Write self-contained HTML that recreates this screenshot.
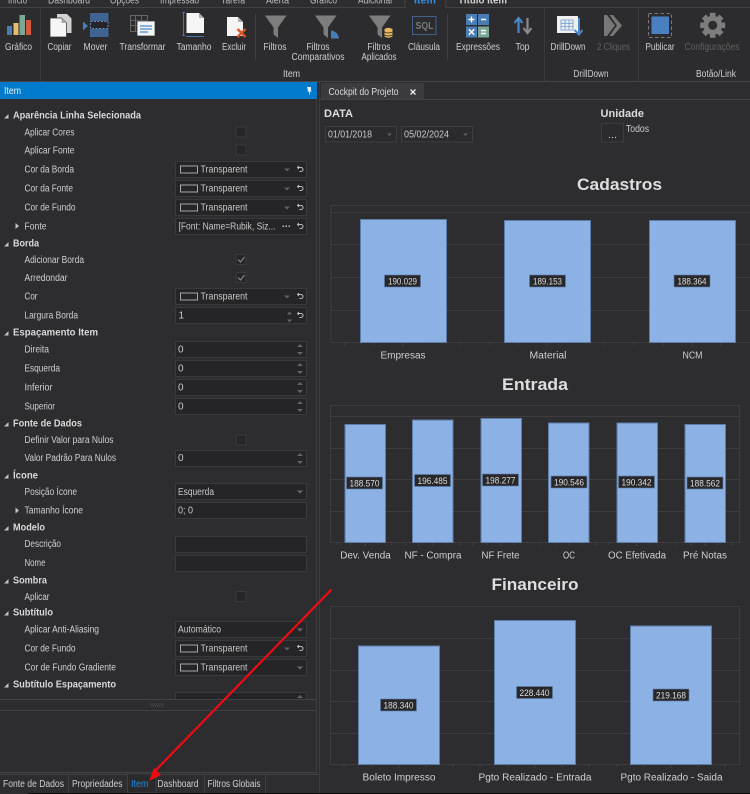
<!DOCTYPE html>
<html lang="pt"><head><meta charset="utf-8"><title>Cockpit do Projeto</title>
<style>
html,body{margin:0;padding:0;background:#2d2d30;width:750px;height:794px;overflow:hidden}
svg{display:block;filter:blur(.3px)}
text{font-family:"Liberation Sans",sans-serif;font-size:10px;fill:#cfcfcf}
.h{font-weight:bold;fill:#d8d8d8;font-size:10px}
.v{fill:#c8c8c8}
.r{text-anchor:middle;fill:#cdcdcd;font-size:10px}
.t{font-weight:bold;font-size:17px;fill:#dedede;text-anchor:middle}
.c{text-anchor:middle;font-size:10px;fill:#cfcfcf}
.l{text-anchor:middle;font-size:9.5px;fill:#dcdcdc}
</style></head><body>
<svg width="750" height="794" viewBox="0 0 750 794">
<defs>
<g id="ctl"><rect x="175.500" y=".5" width="131" height="16" fill="#252527" stroke="#3a3a3d"/></g>
<g id="sw"><rect x="180.500" y="5" width="17" height="7" fill="none" stroke="#a8a8a8"/></g>
<path id="dd" d="M284 7.500h6l-3 3z" fill="#5f5f62"/>
<path id="dd2" d="M297 7.500h6l-3 3z" fill="#6a6a6d"/>
<g id="rs"><path d="M298.500 6.500h2.500a2 2 0 0 1 0 4h-1.500" fill="none" stroke="#bdbdbd"/><path d="M299 4.500l-2.200 2 2.200 2z" fill="#bdbdbd"/></g>
<g id="sp"><path d="M297 6l3-3 3 3zM297 11h6l-3 3z" fill="#636366"/></g>
<rect id="cb" x="236" y="0" width="10" height="10" fill="#262628" stroke="#3a3a3d"/>
<path id="tri" d="M3.500 3.500h-4.500l4.500-4.500z" fill="#c0c0c0"/>
<path id="tr2" d="M0-3l3.500 3-3.500 3z" fill="#c0c0c0"/>
<path id="fun" d="M0 0h21.500L13 12v10.500L8.500 19V12z" fill="#7d7d7d"/>
</defs>

<rect width="750" height="794" fill="#2d2d30"/>
<!-- Top tabs -->
<text x="8" y="3.500" textLength="19" lengthAdjust="spacingAndGlyphs" style="fill:#bdbdbd">Início</text>
<text x="48" y="3.500" textLength="42" lengthAdjust="spacingAndGlyphs" style="fill:#bdbdbd">Dashboard</text>
<text x="110" y="3.500" textLength="29" lengthAdjust="spacingAndGlyphs" style="fill:#bdbdbd">Opções</text>
<text x="160" y="3.500" textLength="39" lengthAdjust="spacingAndGlyphs" style="fill:#bdbdbd">Impressão</text>
<text x="221" y="3.500" textLength="24" lengthAdjust="spacingAndGlyphs" style="fill:#bdbdbd">Tarefa</text>
<text x="266" y="3.500" textLength="23" lengthAdjust="spacingAndGlyphs" style="fill:#bdbdbd">Alerta</text>
<text x="310" y="3.500" textLength="27" lengthAdjust="spacingAndGlyphs" style="fill:#bdbdbd">Gráfico</text>
<text x="358" y="3.500" textLength="34" lengthAdjust="spacingAndGlyphs" style="fill:#bdbdbd">Adicional</text>
<text x="414" y="3.500" textLength="22" lengthAdjust="spacingAndGlyphs" style="fill:#2f8fe6;font-weight:bold">Item</text>
<text x="458" y="3.500" textLength="49" lengthAdjust="spacingAndGlyphs" style="font-weight:bold;fill:#d5d5d5">Título Item</text>
<path d="M0 7.500H405V0M446 0V7.500H750" fill="none" stroke="#424245"/>
<rect x="0" y="8" width="750" height="73" fill="#2c2c2f"/>
<path d="M0 81.500H750" stroke="#454548"/>
<path d="M40.500 8V81M544.500 8V81M638.500 8V81" stroke="#3a3a3d"/>
<path d="M255.500 14V60M447.500 14V60" stroke="#3f3f42"/>

<!-- Ribbon icons -->
<rect x="7" y="26" width="5" height="9" fill="#4a7db5"/>
<rect x="13.500" y="23" width="5" height="12" fill="#e3bd6a"/>
<rect x="19.500" y="15" width="5.500" height="20" fill="#7ba797"/>
<rect x="26" y="20" width="5" height="15" fill="#d6593b"/>

<path d="M57 14h10l4.500 4.500V33H57z" fill="#d2d2d2"/>
<path d="M50 18h11.500l5 5v14H50z" fill="#f6f6f6" stroke="#2c2c2f" stroke-width=".7"/>
<path d="M61.500 18v5h5z" fill="#aaa"/>

<rect x="90" y="13" width="18.500" height="8" fill="#3f6491"/>
<rect x="90" y="29" width="18.500" height="8" fill="#3f6491"/>
<rect x="90.500" y="21.500" width="17.500" height="7" fill="#24242a" stroke="#6b8fc0" stroke-dasharray="2 1.500"/>
<path d="M83 21.500v9l5-4.500z" fill="#4a7db5"/>

<path d="M130.500 15.500h17v16h-17zM130.500 20.500h17M130.500 25.500h17M135.500 15.500v16M141.500 15.500v16" stroke="#666" fill="none"/>
<rect x="137" y="21" width="18" height="15" fill="#f3f3f3" stroke="#2c2c2f" stroke-width=".7"/>
<path d="M140 26h12M140 29h12M140 32h8" stroke="#6b9bd0" stroke-width="1.500"/>

<path d="M183.500 12V36M182 12.500h3M182 35.500h3" stroke="#4a74a8"/>
<path d="M186.500 13h12.500l5 5v15H186.500z" fill="#f5f5f5"/><path d="M199 13v5h5z" fill="#b0b0b0"/>
<path d="M186 36.500h18" stroke="#4a74a8"/>

<path d="M227 17h11l5 5v14H227z" fill="#f5f5f5"/><path d="M238 17v5h5z" fill="#b0b0b0"/>
<path d="M237.500 29l8 8M245.500 29l-8 8" stroke="#d9542b" stroke-width="2.400"/>

<use href="#fun" x="265" y="15.500"/>
<use href="#fun" x="315" y="15.500"/>
<path d="M331 38.500v-8q7 1 8 8z" fill="#4a7db5"/>
<use href="#fun" x="369" y="15.500"/>
<path d="M384.500 29q4-2.500 8 0v7.500q-4 2.500-8 0z" fill="#e3b85f"/><path d="M384.500 32q4 2 8 0M384.500 35q4 2 8 0" stroke="#2c2c2f" stroke-width=".7" fill="none"/>

<rect x="412.500" y="16.500" width="23.500" height="18" fill="none" stroke="#41618c"/>
<text x="415.500" y="29" textLength="18" lengthAdjust="spacingAndGlyphs" style="font-weight:bold;font-size:10px;fill:#7a7a7a">SQL</text>

<rect x="466" y="14" width="11" height="11" fill="#4a7db5"/><rect x="478" y="14" width="11" height="11" fill="#4a7db5"/>
<rect x="466" y="26.500" width="11" height="11" fill="#4a7db5"/><rect x="478" y="26.500" width="11" height="11" fill="#7ba797"/>
<path d="M468.500 19.500h6M471.500 16.500v6M481 19.500h5M468.800 29.300l5.400 5.400M474.200 29.300l-5.400 5.400M481 30.500h5M481 33.500h5" stroke="#fff" stroke-width="1.400" fill="none"/>

<path d="M518.500 33V19M514.500 23l4-5 4 5" fill="none" stroke="#4a86c8" stroke-width="2.200"/>
<path d="M527.500 18V32M523.500 28l4 5 4-5" fill="none" stroke="#8a8a8a" stroke-width="2.200"/>

<rect x="557" y="16" width="21" height="17" fill="#efefef"/>
<path d="M561 20h12v10h-12zM561 23.300h12M561 26.600h12M565 20v10M569 20v10" fill="none" stroke="#6b9bd0" stroke-width=".8"/>
<path d="M579 18V33M574.500 30l4.500 4.500 3.500-4.500" fill="none" stroke="#4a86c8" stroke-width="2"/>

<path d="M604 15h3l8 10.500-8 10.500h-3z" fill="#777"/>
<path d="M609.500 15h3.500l9 10.500-9 10.500h-3.500l7.500-10.500z" fill="#777"/>

<rect x="648.500" y="13.500" width="23" height="24" fill="none" stroke="#777" stroke-dasharray="3.500 2.500"/>
<rect x="651.500" y="16.500" width="17.500" height="17.500" fill="#4a7fc1"/>

<g transform="translate(712.700 25.300)" fill="#7d7d7d">
<circle r="9.500"/>
<rect x="-2.800" y="-12.500" width="5.600" height="25"/><rect x="-2.800" y="-12.500" width="5.600" height="25" transform="rotate(45)"/><rect x="-2.800" y="-12.500" width="5.600" height="25" transform="rotate(90)"/><rect x="-2.800" y="-12.500" width="5.600" height="25" transform="rotate(135)"/>
<circle r="4.500" fill="#2c2c2f"/>
</g>

<!-- Ribbon labels -->
<text class="r" x="18.500" y="50" textLength="27" lengthAdjust="spacingAndGlyphs">Gráfico</text>
<text class="r" x="59.500" y="50" textLength="24" lengthAdjust="spacingAndGlyphs">Copiar</text>
<text class="r" x="95.500" y="50" textLength="24" lengthAdjust="spacingAndGlyphs">Mover</text>
<text class="r" x="142.500" y="50" textLength="46" lengthAdjust="spacingAndGlyphs">Transformar</text>
<text class="r" x="194" y="50" textLength="35" lengthAdjust="spacingAndGlyphs">Tamanho</text>
<text class="r" x="234" y="50" textLength="24" lengthAdjust="spacingAndGlyphs">Excluir</text>
<text class="r" x="275" y="50" textLength="23" lengthAdjust="spacingAndGlyphs">Filtros</text>
<text class="r" x="318" y="50" textLength="23" lengthAdjust="spacingAndGlyphs">Filtros</text>
<text class="r" x="318" y="60" textLength="53" lengthAdjust="spacingAndGlyphs">Comparativos</text>
<text class="r" x="379" y="50" textLength="23" lengthAdjust="spacingAndGlyphs">Filtros</text>
<text class="r" x="379" y="60" textLength="35" lengthAdjust="spacingAndGlyphs">Aplicados</text>
<text class="r" x="424" y="50" textLength="32" lengthAdjust="spacingAndGlyphs">Cláusula</text>
<text class="r" x="478" y="50" textLength="44" lengthAdjust="spacingAndGlyphs">Expressões</text>
<text class="r" x="522.500" y="50" textLength="14" lengthAdjust="spacingAndGlyphs">Top</text>
<text class="r" x="568" y="50" textLength="35" lengthAdjust="spacingAndGlyphs">DrillDown</text>
<text class="r" x="613.500" y="50" textLength="33" lengthAdjust="spacingAndGlyphs" style="fill:#5f5f5f">2 Cliques</text>
<text class="r" x="660" y="50" textLength="29" lengthAdjust="spacingAndGlyphs">Publicar</text>
<text class="r" x="712" y="50" textLength="55" lengthAdjust="spacingAndGlyphs" style="fill:#5f5f5f">Configurações</text>
<text class="r" x="291.500" y="77" textLength="17" lengthAdjust="spacingAndGlyphs">Item</text>
<text class="r" x="591" y="77" textLength="35" lengthAdjust="spacingAndGlyphs">DrillDown</text>
<text class="r" x="716" y="77" textLength="40" lengthAdjust="spacingAndGlyphs">Botão/Link</text>

<!-- Left panel -->
<rect x="0" y="82" width="317" height="17" fill="#007acc"/>
<text x="4" y="94" textLength="17" lengthAdjust="spacingAndGlyphs" style="fill:#e6f0fa">Item</text>
<path d="M307 87h4v3.500l1 1h-2v3h-.8v-3h-2.200l1-1z" fill="#e8f1fa"/>
<path d="M316.500 99V774M319.500 82V794" stroke="#3c3c3f"/>

<!-- Headers -->
<text class="h" x="13" y="118.500" textLength="128" lengthAdjust="spacingAndGlyphs">Aparência Linha Selecionada</text>
<text class="h" x="13" y="246.500" textLength="26" lengthAdjust="spacingAndGlyphs">Borda</text>
<text class="h" x="13" y="335.500" textLength="85" lengthAdjust="spacingAndGlyphs">Espaçamento Item</text>
<text class="h" x="13" y="426.500" textLength="69" lengthAdjust="spacingAndGlyphs">Fonte de Dados</text>
<text class="h" x="13" y="478.500" textLength="25" lengthAdjust="spacingAndGlyphs">Ícone</text>
<text class="h" x="13" y="530.500" textLength="32" lengthAdjust="spacingAndGlyphs">Modelo</text>
<text class="h" x="13" y="583.500" textLength="34" lengthAdjust="spacingAndGlyphs">Sombra</text>
<text class="h" x="13" y="615.500" textLength="40" lengthAdjust="spacingAndGlyphs">Subtítulo</text>
<text class="h" x="13" y="687.500" textLength="103" lengthAdjust="spacingAndGlyphs">Subtítulo Espaçamento</text>
<use href="#tri" x="5" y="115"/><use href="#tri" x="5" y="243"/><use href="#tri" x="5" y="332"/><use href="#tri" x="5" y="423"/><use href="#tri" x="5" y="475"/><use href="#tri" x="5" y="527"/><use href="#tri" x="5" y="580"/><use href="#tri" x="5" y="612"/><use href="#tri" x="5" y="684"/>
<use href="#tr2" x="15.500" y="226"/><use href="#tr2" x="15.500" y="510.500"/>

<!-- Labels -->
<text x="24.500" y="135.500" textLength="50" lengthAdjust="spacingAndGlyphs">Aplicar Cores</text>
<text x="24.500" y="153.500" textLength="50" lengthAdjust="spacingAndGlyphs">Aplicar Fonte</text>
<text x="24.500" y="172.500" textLength="49.500" lengthAdjust="spacingAndGlyphs">Cor da Borda</text>
<text x="24.500" y="191.500" textLength="48.500" lengthAdjust="spacingAndGlyphs">Cor da Fonte</text>
<text x="24.500" y="210.500" textLength="51" lengthAdjust="spacingAndGlyphs">Cor de Fundo</text>
<text x="24.500" y="229.500" textLength="22" lengthAdjust="spacingAndGlyphs">Fonte</text>
<text x="24.500" y="263" textLength="59.500" lengthAdjust="spacingAndGlyphs">Adicionar Borda</text>
<text x="24.500" y="281" textLength="43" lengthAdjust="spacingAndGlyphs">Arredondar</text>
<text x="24.500" y="299.500" textLength="13" lengthAdjust="spacingAndGlyphs">Cor</text>
<text x="24.500" y="318.500" textLength="53.500" lengthAdjust="spacingAndGlyphs">Largura Borda</text>
<text x="24.500" y="352.500" textLength="24.500" lengthAdjust="spacingAndGlyphs">Direita</text>
<text x="24.500" y="371.500" textLength="35.500" lengthAdjust="spacingAndGlyphs">Esquerda</text>
<text x="24.500" y="390.500" textLength="28" lengthAdjust="spacingAndGlyphs">Inferior</text>
<text x="24.500" y="409.500" textLength="30.500" lengthAdjust="spacingAndGlyphs">Superior</text>
<text x="24.500" y="443" textLength="89" lengthAdjust="spacingAndGlyphs">Definir Valor para Nulos</text>
<text x="24.500" y="461" textLength="91.500" lengthAdjust="spacingAndGlyphs">Valor Padrão Para Nulos</text>
<text x="24.500" y="495" textLength="52.500" lengthAdjust="spacingAndGlyphs">Posição Ícone</text>
<text x="24.500" y="513.500" textLength="58.500" lengthAdjust="spacingAndGlyphs">Tamanho Ícone</text>
<text x="24.500" y="547" textLength="36.500" lengthAdjust="spacingAndGlyphs">Descrição</text>
<text x="24.500" y="566" textLength="21" lengthAdjust="spacingAndGlyphs">Nome</text>
<text x="24.500" y="600" textLength="25" lengthAdjust="spacingAndGlyphs">Aplicar</text>
<text x="24.500" y="632.500" textLength="74.500" lengthAdjust="spacingAndGlyphs">Aplicar Anti-Aliasing</text>
<text x="24.500" y="651.500" textLength="51" lengthAdjust="spacingAndGlyphs">Cor de Fundo</text>
<text x="24.500" y="670.500" textLength="91.500" lengthAdjust="spacingAndGlyphs">Cor de Fundo Gradiente</text>

<!-- Checkboxes -->
<use href="#cb" y="127"/><use href="#cb" y="145"/><use href="#cb" y="254.500"/><use href="#cb" y="272.500"/><use href="#cb" y="435"/><use href="#cb" y="591.500"/>
<path d="M238 259.500l2.500 2.500 4-5M238 277.500l2.500 2.500 4-5" fill="none" stroke="#8a8a8a" stroke-width="1.100"/>

<!-- Controls -->
<use href="#ctl" y="161"/><use href="#sw" y="161"/><use href="#dd" y="161"/><use href="#rs" y="161"/>
<use href="#ctl" y="180"/><use href="#sw" y="180"/><use href="#dd" y="180"/><use href="#rs" y="180"/>
<use href="#ctl" y="199"/><use href="#sw" y="199"/><use href="#dd" y="199"/><use href="#rs" y="199"/>
<use href="#ctl" y="218"/><use href="#rs" y="218"/>
<use href="#ctl" y="288"/><use href="#sw" y="288"/><use href="#dd" y="288"/><use href="#rs" y="288"/>
<use href="#ctl" y="307"/><use href="#rs" y="307"/>
<use href="#ctl" y="341"/><use href="#sp" y="341"/>
<use href="#ctl" y="360"/><use href="#sp" y="360"/>
<use href="#ctl" y="379"/><use href="#sp" y="379"/>
<use href="#ctl" y="398"/><use href="#sp" y="398"/>
<use href="#ctl" y="450"/><use href="#sp" y="450"/>
<use href="#ctl" y="483"/><use href="#dd2" y="483"/>
<use href="#ctl" y="502"/>
<use href="#ctl" y="536"/>
<use href="#ctl" y="555"/>
<use href="#ctl" y="621"/><use href="#dd2" y="621"/>
<use href="#ctl" y="640"/><use href="#sw" y="640"/><use href="#dd" y="640"/><use href="#rs" y="640"/>
<use href="#ctl" y="659"/><use href="#sw" y="659"/><use href="#dd2" y="659"/>
<use href="#ctl" y="692"/><use href="#sp" y="692"/>
<path d="M287 314.500l2.500-3 2.500 3zM287 319.500h5l-2.500 3z" fill="#636366"/>
<text class="v" x="200.500" y="172.500" textLength="47" lengthAdjust="spacingAndGlyphs">Transparent</text>
<text class="v" x="200.500" y="191.500" textLength="47" lengthAdjust="spacingAndGlyphs">Transparent</text>
<text class="v" x="200.500" y="210.500" textLength="47" lengthAdjust="spacingAndGlyphs">Transparent</text>
<text class="v" x="178.500" y="229.500" textLength="97" lengthAdjust="spacingAndGlyphs">[Font: Name=Rubik, Siz...</text>
<text x="282" y="229.500" textLength="9" lengthAdjust="spacingAndGlyphs" style="font-weight:bold;fill:#d0d0d0">···</text>
<text class="v" x="200.500" y="299.500" textLength="47" lengthAdjust="spacingAndGlyphs">Transparent</text>
<text class="v" x="178.500" y="318.500">1</text>
<text class="v" x="178" y="352.500">0</text>
<text class="v" x="178" y="371.500">0</text>
<text class="v" x="178" y="390.500">0</text>
<text class="v" x="178" y="409.500">0</text>
<text class="v" x="178" y="461">0</text>
<text class="v" x="178" y="495" textLength="36" lengthAdjust="spacingAndGlyphs">Esquerda</text>
<text class="v" x="178" y="513.500" textLength="15" lengthAdjust="spacingAndGlyphs">0; 0</text>
<text class="v" x="178" y="632.500" textLength="43" lengthAdjust="spacingAndGlyphs">Automático</text>
<text class="v" x="200.500" y="651.500" textLength="47" lengthAdjust="spacingAndGlyphs">Transparent</text>
<text class="v" x="200.500" y="670.500" textLength="47" lengthAdjust="spacingAndGlyphs">Transparent</text>

<!-- Splitter & lower panel -->
<rect x="0" y="699" width="316" height="12" fill="#2d2d30"/>
<path d="M0 699.500H316M0 710.500H316M0 772.500H316M0 774.500H319" stroke="#424245"/>
<path d="M150 704h14M151 706h14" stroke="#57575a" stroke-dasharray="1 1"/>

<!-- Bottom tabs -->
<rect x="127.500" y="774" width="28.500" height="19" fill="#2a2a2d" stroke="#3f3f42"/>
<path d="M68.500 775V793M204.500 775V793M265.500 775V793" stroke="#3f3f42"/>
<text x="3" y="787" textLength="61" lengthAdjust="spacingAndGlyphs">Fonte de Dados</text>
<text x="72" y="787" textLength="50.500" lengthAdjust="spacingAndGlyphs">Propriedades</text>
<text x="131" y="787" textLength="17.500" lengthAdjust="spacingAndGlyphs" style="fill:#1f8ae0">Item</text>
<text x="157.500" y="787" textLength="41" lengthAdjust="spacingAndGlyphs">Dashboard</text>
<text x="207.500" y="787" textLength="53" lengthAdjust="spacingAndGlyphs">Filtros Globais</text>
<rect x="28" y="793" width="722" height="1" fill="#0c0c0d"/>

<!-- Document tab -->
<rect x="321" y="83" width="103" height="16" fill="#3b3b3e"/>
<path d="M320 99.500H750" stroke="#434346"/>
<text x="328.500" y="95" textLength="70" lengthAdjust="spacingAndGlyphs" style="fill:#dcdcdc">Cockpit do Projeto</text>
<path d="M410.500 89.500l5 5M415.500 89.500l-5 5" stroke="#eee" stroke-width="1.300"/>

<!-- Filters -->
<text x="324" y="117" textLength="29" lengthAdjust="spacingAndGlyphs" style="font-weight:bold;font-size:11px;fill:#dcdcdc">DATA</text>
<text x="600.500" y="117" textLength="43.500" lengthAdjust="spacingAndGlyphs" style="font-weight:bold;font-size:11px;fill:#dcdcdc">Unidade</text>
<rect x="325.500" y="126.500" width="71" height="15.500" fill="#2b2b2e" stroke="#3d3d40"/>
<rect x="401.500" y="126.500" width="71" height="15.500" fill="#2b2b2e" stroke="#3d3d40"/>
<text class="v" x="328" y="137.500" textLength="44" lengthAdjust="spacingAndGlyphs">01/01/2018</text>
<text class="v" x="404" y="137.500" textLength="45" lengthAdjust="spacingAndGlyphs">05/02/2024</text>
<path d="M387 133.500h5l-2.500 2.500zM463 133.500h5l-2.500 2.500z" fill="#5f5f62"/>
<rect x="601.500" y="123.500" width="22" height="18.500" fill="#2b2b2e" stroke="#3d3d40"/>
<text x="608" y="138" textLength="9" lengthAdjust="spacingAndGlyphs">...</text>
<text x="626" y="132" textLength="23" lengthAdjust="spacingAndGlyphs">Todos</text>

<!-- Chart 1 -->
<text class="t" x="619.500" y="190" textLength="85" lengthAdjust="spacingAndGlyphs">Cadastros</text>
<path d="M331 342.500V205.500H750M331 212.500H750M331 244.500H750M331 277.500H750M331 310.500H750M331 342.500H750" fill="none" stroke="#3d3d40"/>
<path d="M345 343v2M360 343v2M374 343v2M403 343v3M432 343v2M461 343v2M490 343v2M518 343v2M547 343v3M576 343v2M605 343v2M634 343v2M663 343v2M692 343v3M721 343v2" stroke="#444447"/>
<g fill="#8cb1e5" stroke="#5d7da8">
<rect x="360.500" y="219.500" width="86" height="123"/>
<rect x="504.500" y="220.500" width="86" height="122"/>
<rect x="649.500" y="220.500" width="86" height="122"/>
</g>
<g fill="#28282b" stroke="#5d7da8" stroke-width=".6">
<rect x="384.500" y="275" width="36" height="12"/><rect x="529.500" y="275" width="36" height="12"/><rect x="674" y="275" width="36" height="12"/>
</g>
<text class="l" x="402.500" y="284.500" textLength="29" lengthAdjust="spacingAndGlyphs">190.029</text>
<text class="l" x="547.500" y="284.500" textLength="29" lengthAdjust="spacingAndGlyphs">189.153</text>
<text class="l" x="692" y="284.500" textLength="29" lengthAdjust="spacingAndGlyphs">188.364</text>
<text class="c" x="403" y="358.500" textLength="45" lengthAdjust="spacingAndGlyphs">Empresas</text>
<text class="c" x="548" y="358.500" textLength="37" lengthAdjust="spacingAndGlyphs">Material</text>
<text class="c" x="692.500" y="358.500" textLength="20" lengthAdjust="spacingAndGlyphs">NCM</text>

<!-- Chart 2 -->
<text class="t" x="535" y="390" textLength="66" lengthAdjust="spacingAndGlyphs">Entrada</text>
<path d="M330.500 405.500H739.500V542.500H330.500ZM331 416.500H739M331 448.500H739M331 479.500H739M331 511.500H739" fill="none" stroke="#3d3d40"/>
<path d="M337 543v2M351 543v2M365 543v3M378 543v2M392 543v2M405 543v2M419 543v2M433 543v3M446 543v2M460 543v2M473 543v2M487 543v2M501 543v3M514 543v2M528 543v2M541 543v2M555 543v2M569 543v3M582 543v2M596 543v2M609 543v2M623 543v2M637 543v3M650 543v2M664 543v2M677 543v2M691 543v2M705 543v3M718 543v2M732 543v2" stroke="#444447"/>
<g fill="#8cb1e5" stroke="#5d7da8">
<rect x="345" y="424.500" width="40.500" height="118"/>
<rect x="412.500" y="420" width="40.500" height="122.500"/>
<rect x="481" y="418.500" width="40.500" height="124"/>
<rect x="548.500" y="423" width="40.500" height="119.500"/>
<rect x="617" y="423" width="40.500" height="119.500"/>
<rect x="685" y="424.500" width="40.500" height="118"/>
</g>
<g fill="#28282b" stroke="#5d7da8" stroke-width=".6">
<rect x="346.500" y="477" width="36" height="12"/><rect x="414.500" y="474.500" width="36" height="12"/><rect x="482.500" y="474" width="36" height="12"/><rect x="551" y="476" width="36" height="12"/><rect x="618.500" y="476" width="36" height="12"/><rect x="687" y="477" width="36" height="12"/>
</g>
<text class="l" x="364.500" y="486.500" textLength="30" lengthAdjust="spacingAndGlyphs">188.570</text>
<text class="l" x="432.500" y="484" textLength="30" lengthAdjust="spacingAndGlyphs">196.485</text>
<text class="l" x="500.500" y="483.500" textLength="30" lengthAdjust="spacingAndGlyphs">198.277</text>
<text class="l" x="569" y="485.500" textLength="30" lengthAdjust="spacingAndGlyphs">190.546</text>
<text class="l" x="636.500" y="485.500" textLength="30" lengthAdjust="spacingAndGlyphs">190.342</text>
<text class="l" x="705" y="486.500" textLength="30" lengthAdjust="spacingAndGlyphs">188.562</text>
<text class="c" x="365.500" y="558.500" textLength="50.500" lengthAdjust="spacingAndGlyphs">Dev. Venda</text>
<text class="c" x="433" y="558.500" textLength="57" lengthAdjust="spacingAndGlyphs">NF - Compra</text>
<text class="c" x="500.500" y="558.500" textLength="38" lengthAdjust="spacingAndGlyphs">NF Frete</text>
<text class="c" x="569" y="558.500" textLength="12" lengthAdjust="spacingAndGlyphs">OC</text>
<text class="c" x="637" y="558.500" textLength="58" lengthAdjust="spacingAndGlyphs">OC Efetivada</text>
<text class="c" x="705" y="558.500" textLength="44" lengthAdjust="spacingAndGlyphs">Pré Notas</text>

<!-- Chart 3 -->
<text class="t" x="535" y="590" textLength="87" lengthAdjust="spacingAndGlyphs">Financeiro</text>
<path d="M330.500 606.500H739.500V764.500H330.500ZM331 638.500H739M331 670.500H739M331 701.500H739M331 733.500H739" fill="none" stroke="#3d3d40"/>
<path d="M344 765v2M372 765v2M399 765v3M426 765v2M453 765v2M480 765v2M508 765v2M535 765v3M562 765v2M589 765v2M617 765v2M644 765v2M671 765v3M698 765v2M725 765v2" stroke="#444447"/>
<g fill="#8cb1e5" stroke="#5d7da8">
<rect x="358.500" y="646" width="81" height="118.500"/>
<rect x="494.500" y="620.500" width="81" height="144"/>
<rect x="630.500" y="626" width="81" height="138.500"/>
</g>
<g fill="#28282b" stroke="#5d7da8" stroke-width=".6">
<rect x="380.500" y="699" width="36" height="12"/><rect x="516.500" y="686.500" width="36" height="12"/><rect x="653" y="689" width="36" height="12"/>
</g>
<text class="l" x="398.500" y="708.500" textLength="30" lengthAdjust="spacingAndGlyphs">188.340</text>
<text class="l" x="534.500" y="696" textLength="30" lengthAdjust="spacingAndGlyphs">228.440</text>
<text class="l" x="671" y="698.500" textLength="30" lengthAdjust="spacingAndGlyphs">219.168</text>
<text class="c" x="399" y="780.500" textLength="73" lengthAdjust="spacingAndGlyphs">Boleto Impresso</text>
<text class="c" x="535" y="780.500" textLength="113" lengthAdjust="spacingAndGlyphs">Pgto Realizado - Entrada</text>
<text class="c" x="671.500" y="780.500" textLength="102" lengthAdjust="spacingAndGlyphs">Pgto Realizado - Saida</text>

<!-- Red arrow -->
<path d="M331.500 589.500L155 771" stroke="#ee0a12" stroke-width="2.200" fill="none"/>
<path d="M149 781l5-13 7 7z" fill="#ee0a12"/>
</svg>
</body></html>
